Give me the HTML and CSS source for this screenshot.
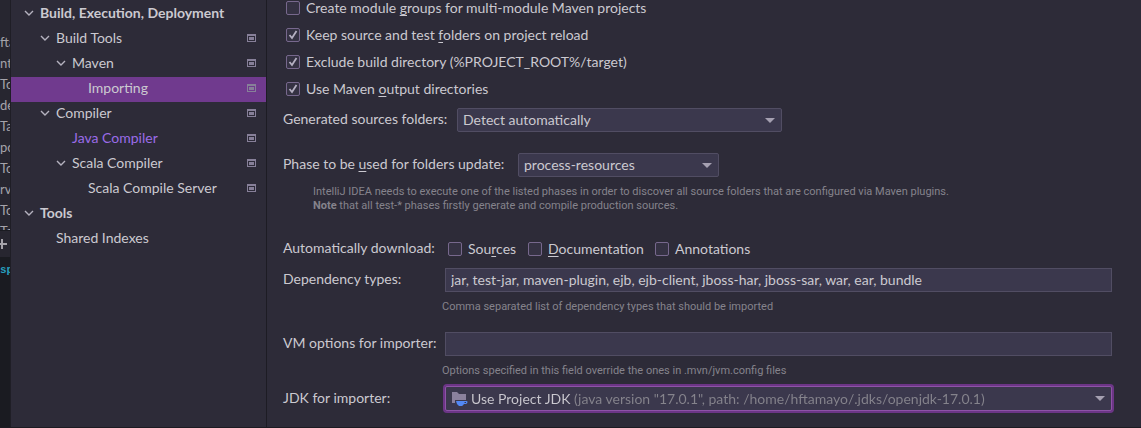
FILE: index.html
```html
<!DOCTYPE html>
<html lang="en">
<head>
<meta charset="utf-8">
<title>Settings – Importing</title>
<link rel="stylesheet" href="styles.css">
</head>
<body>
<svg class="defs" aria-hidden="true">
  <symbol id="chevron" viewBox="0 0 10 10"><path d="M1 3l4 4 4-4" fill="none" stroke="currentColor" stroke-width="1.4"/></symbol>
  <symbol id="project" viewBox="0 0 9 8"><path fill="currentColor" fill-rule="evenodd" d="M0 0h9v8H0zM1 2h7v5H1zM2 3h5v3H2z"/></symbol>
</svg>
<div class="window">
  <div class="behind" aria-hidden="true">
    <div class="behind-list">
      <span>fta</span><span>nt</span><span>To</span><span>de</span><span>Ta</span><span>po</span><span>To</span><span>rvi</span><span>To</span><span>To</span>
    </div>
    <div class="behind-bar"><svg class="plus" viewBox="0 0 7 10"><path d="M2 0v10M0 5h7" stroke="currentColor" stroke-width="2"/></svg></div>
    <div class="behind-code">sp</div>
  </div>
  <nav class="tree" aria-label="Settings">
    <div class="row bold"><svg class="chevron"><use href="#chevron"/></svg><span>Build, Execution, Deployment</span></div>
    <div class="row level-1"><svg class="chevron"><use href="#chevron"/></svg><span>Build Tools</span><svg class="scope"><use href="#project"/></svg></div>
    <div class="row level-2"><svg class="chevron"><use href="#chevron"/></svg><span>Maven</span><svg class="scope"><use href="#project"/></svg></div>
    <div class="row level-3 leaf selected"><span>Importing</span><svg class="scope"><use href="#project"/></svg></div>
    <div class="row level-1"><svg class="chevron"><use href="#chevron"/></svg><span>Compiler</span><svg class="scope"><use href="#project"/></svg></div>
    <div class="row level-2 leaf modified"><span>Java Compiler</span><svg class="scope"><use href="#project"/></svg></div>
    <div class="row level-2"><svg class="chevron"><use href="#chevron"/></svg><span>Scala Compiler</span><svg class="scope"><use href="#project"/></svg></div>
    <div class="row level-3 leaf"><span>Scala Compile Server</span><svg class="scope"><use href="#project"/></svg></div>
    <div class="row bold"><svg class="chevron"><use href="#chevron"/></svg><span>Tools</span></div>
    <div class="row level-1 leaf"><span>Shared Indexes</span></div>
  </nav>
  <main class="form">
    <div class="checks">
      <label class="check"><input type="checkbox"><span>Create module <u>g</u>roups for multi-module Maven projects</span></label>
      <label class="check"><input type="checkbox" checked><span>Keep source and test <u>f</u>olders on project reload</span></label>
      <label class="check"><input type="checkbox" checked><span>Exclude build directory (%PROJECT_ROOT%/target)</span></label>
      <label class="check"><input type="checkbox" checked><span>Use Maven <u>o</u>utput directories</span></label>
    </div>
    <div class="line generated">
      <label class="caption generated-label" for="generated">Generated sources folders:</label>
      <span class="combo combo-wide"><select id="generated"><option>Detect automatically</option></select></span>
    </div>
    <div class="line phase">
      <label class="caption phase-label" for="phase">Phase to be <u>u</u>sed for folders update:</label>
      <span class="combo combo-medium"><select id="phase"><option>process-resources</option></select></span>
    </div>
    <p class="hint note">IntelliJ IDEA needs to execute one of the listed phases in order to discover all source folders that are configured via Maven plugins.<br><b>Note</b> that all test-* phases firstly generate and compile production sources.</p>
    <div class="fields">
      <span class="caption">Automatically download:</span>
      <div class="downloads">
        <label class="check sources"><input type="checkbox"><span>Sou<u>r</u>ces</span></label>
        <label class="check docs"><input type="checkbox"><span><u>D</u>ocumentation</span></label>
        <label class="check"><input type="checkbox"><span>Annotations</span></label>
      </div>
      <label class="caption" for="types">Dependency types:</label>
      <input class="text" id="types" type="text" value="jar, test-jar, maven-plugin, ejb, ejb-client, jboss-har, jboss-sar, war, ear, bundle">
      <p class="hint">Comma separated list of dependency types that should be imported</p>
      <label class="caption" for="vm">VM options for importer:</label>
      <input class="text" id="vm" type="text">
      <p class="hint">Options specified in this field override the ones in .mvn/jvm.config files</p>
      <label class="caption" for="jdk">JDK for importer:</label>
      <span class="combo focused">
        <svg class="jdk-icon" viewBox="0 0 16 14"><path fill="#8b819d" d="M0 0h5l2 2h7v6H3v3H0z"/><path fill="#5288f5" fill-rule="evenodd" d="M4 9h10.500q1 0 1 1.200T14 12h-2q-1 1.500-2 2H7Q4.500 12.500 4 9zM12.500 10v1h1.500v-1z"/></svg>
        <select id="jdk"><option>Use Project JDK (java version "17.0.1", path: /home/hftamayo/.jdks/openjdk-17.0.1)</option></select>
      </span>
    </div>
  </main>
</div>
</body>
</html>
```

FILE: styles.css
```css
* { box-sizing: border-box; }
body {
  margin: 0;
  background: #2d2b38;
  color: #cbc9d0;
  font: 14px/20px Lato, "Noto Sans", sans-serif;
}
input, select { font: inherit; color: inherit; }
p { margin: 0; }
u { text-underline-offset: 2px; text-decoration-skip-ink: none; }
.defs { position: absolute; width: 0; height: 0; }
.window {
  display: grid;
  grid-template-columns: 11px 256px minmax(0, 1fr);
  min-height: 100vh;
  border-bottom: 1px solid #1c1b22;
}

.behind {
  display: flex;
  flex-direction: column;
  overflow: hidden;
  background: #1a1b21;
  color: #a5a3aa;
  border-right: 1px solid #1f1e26;
}
.behind-list {
  display: flex;
  flex-direction: column;
  height: 230px;
  padding-top: 32px;
  overflow: hidden;
  background: #272630;
  font-size: 13px;
}
.behind-list span { flex: none; height: 21px; line-height: 21px; }
.behind-bar {
  display: flex;
  align-items: center;
  height: 28px;
  background: #272630;
  border-top: 1px solid #1a1b21;
  border-bottom: 1px solid #1a1b21;
}
.plus { flex: none; width: 7px; height: 10px; }
.behind-code {
  color: #279fbd;
  font: bold 11px/24px "Liberation Mono", monospace;
}

.tree { padding-top: 2px; border-right: 1px solid #1d1c24; }
.row {
  display: flex;
  align-items: center;
  gap: 6px;
  height: 25px;
  padding: 0 10px 3px 13px;
}
.level-1 { padding-left: 29px; }
.level-2 { padding-left: 45px; }
.level-3 { padding-left: 61px; }
.leaf::before { content: ""; width: 10px; }
.bold { font-weight: bold; }
.modified { color: #9b6be8; }
.selected { background: #703a8e; }
.chevron { width: 10px; height: 10px; color: #b5b2bf; }
.scope { width: 9px; height: 8px; margin-left: auto; color: #878099; }

.form { padding: 0 29px 14px 16px; }
.checks { display: flex; flex-direction: column; gap: 7px; padding: 0 0 0 3px; margin-top: -2px; }
.check { display: flex; align-items: center; gap: 6px; }
.check input {
  appearance: none;
  flex: none;
  width: 14px;
  height: 14px;
  margin: 0;
  border: 1px solid #77688d;
  border-radius: 2px;
  background: #353243;
}
.check input:checked {
  background: #353243 url("data:image/svg+xml,%3Csvg xmlns='http://www.w3.org/2000/svg' viewBox='0 0 12 12'%3E%3Cpath d='M2.5 6l2.5 3 4.500-7' fill='none' stroke='%23b5b0c2' stroke-width='1.8'/%3E%3C/svg%3E") center / 12px 12px no-repeat;
}
.caption { padding-bottom: 2px; }
.line { display: flex; align-items: center; }
.generated { margin-top: 9px; }
.generated-label { width: 174px; }
.phase { margin-top: 21px; }
.phase-label { width: 235px; }
.combo {
  display: flex;
  align-items: center;
  position: relative;
  height: 24px;
  border: 1px solid #514d63;
  border-radius: 2px;
  background: #3b384d;
}
.combo::after {
  content: "";
  position: absolute;
  right: 6px;
  top: 9px;
  border: 5px solid transparent;
  border-top-color: #a5a0b1;
  border-bottom: 0;
  pointer-events: none;
}
.combo-wide { width: 325px; }
.combo-medium { width: 201px; }
.combo select {
  appearance: none;
  flex: 1;
  min-width: 0;
  height: 22px;
  padding: 0 20px 0 5px;
  border: 0;
  outline: 0;
  background: transparent;
}
.hint { color: #85838c; font-family: Roboto, sans-serif; font-size: 11px; line-height: 14px; }
.note { margin: 8px 0 0 30px; }
.fields {
  display: grid;
  grid-template-columns: 162px minmax(0, 1fr);
  align-items: center;
  margin-top: 25px;
}
.downloads { display: flex; gap: 12px; padding-left: 3px; }
.sources { width: 68px; }
.docs { width: 115px; }
.text {
  width: 100%;
  height: 24px;
  margin: 8px 0;
  padding: 0 5px 2px;
  border: 1px solid #514d63;
  outline: 0;
  background: #3b384d;
}
.fields .hint { grid-column: 2; margin-left: -3px; }
#vm { margin-top: 18px; }
.fields label[for="vm"] { margin-top: 9px; }
.fields .combo { margin-top: 8px; }
.fields label[for="jdk"] { margin-top: 8px; }
.combo.focused {
  height: 25px;
  border-color: #8e53a7;
  box-shadow: 0 0 0 2px #6c3586;
}
.jdk-icon { flex: none; width: 16px; height: 14px; margin-left: 6px; }
.focused select {
  padding-left: 3px;
  color: transparent;
  background: linear-gradient(90deg, #cbc9d0 104px, #85838c 104px);
  -webkit-background-clip: text;
  background-clip: text;
}
.focused option { color: #cbc9d0; background: #3b384d; }
```
